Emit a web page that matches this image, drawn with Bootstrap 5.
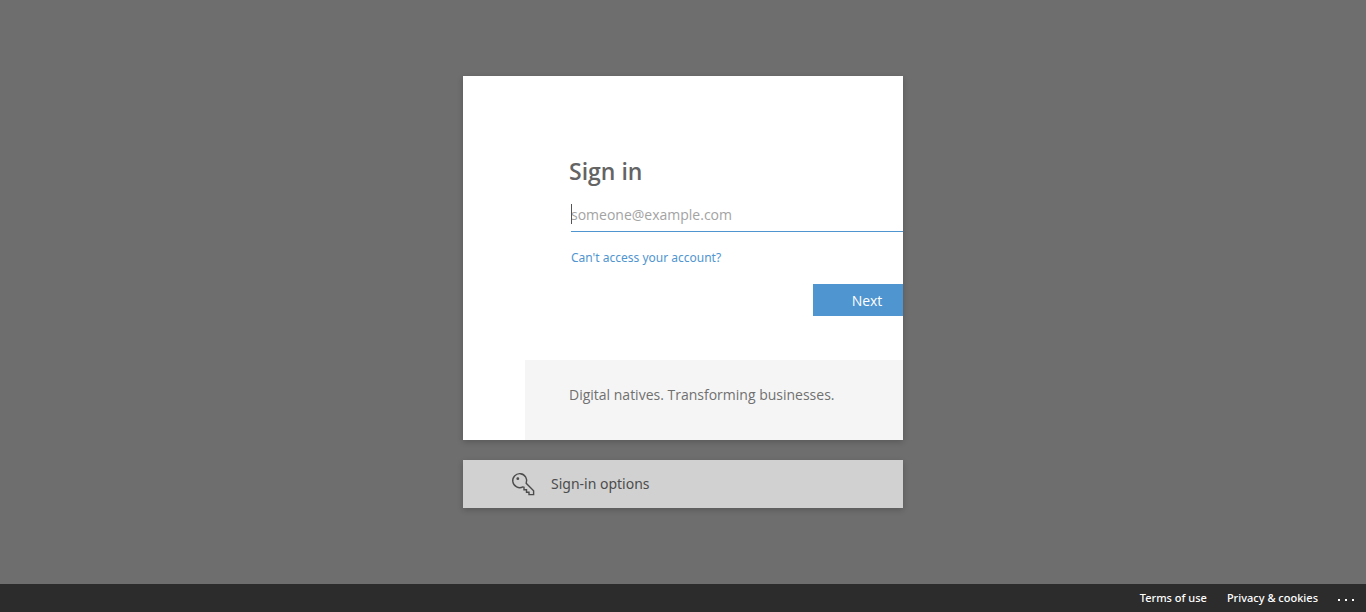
<!DOCTYPE html>
<html lang="en">
<head>
<meta charset="utf-8">
<meta name="viewport" content="width=device-width, initial-scale=1">
<title>Sign in to your account</title>
<link href="https://cdn.jsdelivr.net/npm/bootstrap@5.3.0/dist/css/bootstrap.min.css" rel="stylesheet">
<style>
  body { font-family: "Segoe UI", "Open Sans", "Noto Sans", sans-serif; font-size: 14px; line-height: 20px; background: #6e6e6e; color: #707070; }
  .signin-column { max-width: 440px; gap: 20px; }
  .panel-shadow { box-shadow: 0 2px 6px rgba(0, 0, 0, .2); }
  .slide-in { margin-left: 62px; margin-right: -62px; }
  .signin-body { padding: 80px 44px 44px; }
  .signin-title { font-size: 23px; line-height: 30px; font-weight: 600; color: #646464; margin-bottom: 10px; }
  .account-field { margin-left: 2px; }
  .account-input { height: 36px; padding: 4px 0 2px; border: 0; border-bottom: 1px solid #4f95d0; border-radius: 0; font-size: 14px; color: #666; }
  .account-input:focus { box-shadow: none; border-color: #4f95d0; }
  .account-input::placeholder { color: #a3a3a3; }
  .caret-line { position: absolute; left: 0; top: 8px; width: 1px; height: 20px; background: #555; }
  .help-link { color: #4f95d0; font-size: 12px; margin: 16px 0 16px 2px; }
  .help-link, .options-btn, .page-footer { font-family: "Segoe UI", "Noto Sans", "Open Sans", sans-serif; }
  .next-btn { width: 108px; height: 32px; padding: 0; border: 0; border-radius: 0; background: #4f95d0; color: #fff; font-size: 14px; }
  .tagline { background: #f5f5f5; padding: 25px 44px 35px; }
  .options-btn { padding: 12px 48px; border: 0; background: #d1d1d1; color: #4c4c4c; }
  .page-footer { gap: 20px; padding-right: 12px; background: #2c2c2c; font-size: 11px; font-weight: 500; line-height: 28px; }
  .page-footer a { color: #fff; }
</style>
</head>
<body class="d-flex flex-column min-vh-100">
<main class="flex-grow-1 d-flex flex-column align-items-center justify-content-center">
  <div class="signin-column w-100 d-grid">
    <section class="bg-white panel-shadow overflow-hidden">
      <div class="slide-in">
        <form class="signin-body">
          <h1 class="signin-title">Sign in</h1>
          <div class="account-field position-relative">
            <input type="email" id="account" class="form-control account-input" placeholder="someone@example.com" aria-label="Email address">
            <span class="caret-line" aria-hidden="true"></span>
          </div>
          <div class="help-link"><a href="#" class="text-reset text-decoration-none">Can't access your account?</a></div>
          <div class="d-flex justify-content-end"><button type="submit" class="btn next-btn">Next</button></div>
        </form>
        <div class="tagline">Digital natives. Transforming businesses.</div>
      </div>
    </section>
    <button type="button" class="options-btn panel-shadow d-flex align-items-center gap-3 text-start">
      <svg width="24" height="24" viewBox="0 0 24 24" fill="none" stroke="#4c4c4c" stroke-width="1.4" aria-hidden="true">
        <path d="M15.2 11.3A7 7 0 1 0 11.9 14.9L13 15.3V17.8H15.5V20.2H18V22.6H22.6V18.7Z"/>
        <circle cx="6.8" cy="6.7" r="1.4" fill="#4c4c4c" stroke="none"/>
      </svg>
      <span>Sign-in options</span>
    </button>
  </div>
</main>
<footer class="page-footer d-flex justify-content-end">
  <a href="#" class="text-decoration-none">Terms of use</a>
  <a href="#" class="text-decoration-none">Privacy &amp; cookies</a>
  <button type="button" class="d-flex align-items-center border-0 bg-transparent p-0 pt-1" aria-label="More options">
    <svg width="16" height="2" viewBox="0 0 16 2" fill="#fff" aria-hidden="true"><path d="M0 0h2v2H0zM7 0h2v2H7zM14 0h2v2h-2z"/></svg>
  </button>
</footer>
<script src="https://cdn.jsdelivr.net/npm/bootstrap@5.3.0/dist/js/bootstrap.bundle.min.js"></script>
</body>
</html>
